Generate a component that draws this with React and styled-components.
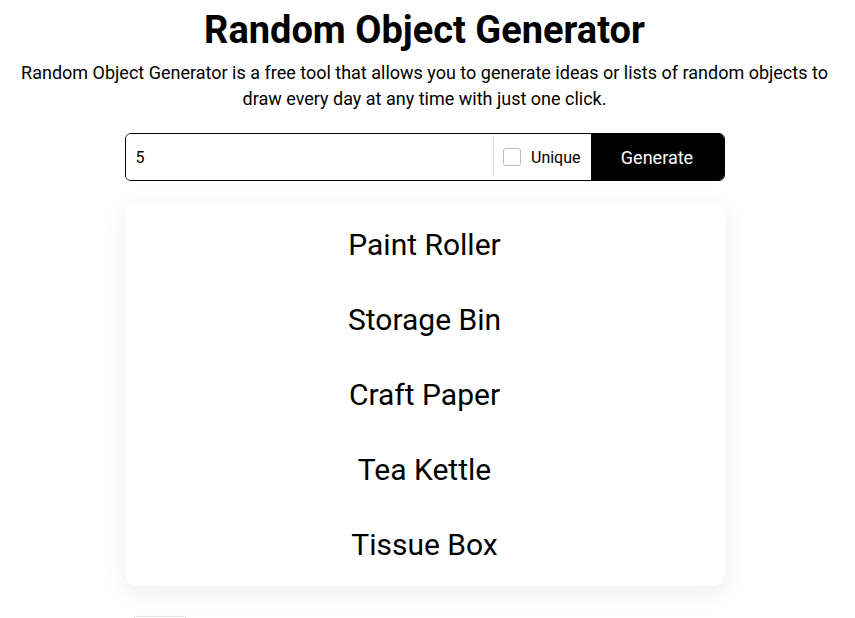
import React from 'react';
import styled, { createGlobalStyle } from 'styled-components';

const GlobalStyle = createGlobalStyle`
  body {
    margin: 0;
    font-family: Roboto, "Liberation Sans", sans-serif;
    color: #000;
    background: #fff;
  }
`;

const Page = styled.div`
  display: flex;
  flex-direction: column;
  align-items: center;
  padding: 8px 6px 0 0;
`;

const Title = styled.h1`
  margin: 0;
  font-size: 38px;
  line-height: 44px;
  font-weight: 700;
`;

const Description = styled.p`
  margin: 8px 0 0;
  font-size: 18px;
  line-height: 26px;
  text-align: center;
  width: 820px;
`;

const Form = styled.div`
  display: flex;
  width: 600px;
  height: 48px;
  box-sizing: border-box;
  margin-top: 21px;
  border: 1px solid #000;
  border-radius: 6px;
  overflow: hidden;
`;

const CountInput = styled.input`
  flex: 1;
  min-width: 0;
  border: none;
  outline: none;
  padding: 0 10px;
  font: 16px Roboto, "Liberation Sans", sans-serif;
  color: #000;
`;

const Divider = styled.div`
  width: 1px;
  background: #ddd;
  margin: 4px 0;
`;

const CheckLabel = styled.label`
  display: flex;
  align-items: center;
  gap: 10px;
  padding: 0 10px 0 9px;
  font-size: 16px;
`;

const Box = styled.span`
  width: 16px;
  height: 16px;
  border: 1px solid #bbb;
  border-radius: 3px;
`;

const GenerateButton = styled.button`
  width: 133px;
  border: none;
  background: #000;
  color: #fff;
  font: 18px Roboto, "Liberation Sans", sans-serif;
  cursor: pointer;
`;

const Card = styled.ul`
  list-style: none;
  margin: 21px 0 0;
  padding: 4.5px 0;
  width: 600px;
  background: #fff;
  border-radius: 12px;
  box-shadow: 0 6px 24px rgba(0, 0, 0, 0.08);
`;

const Item = styled.li`
  height: 75px;
  line-height: 75px;
  text-align: center;
  font-size: 30px;
`;

const Footer = styled.div`
  width: 600px;
  margin-top: 30px;
`;

const Tag = styled.div`
  margin-left: 9px;
  width: 52px;
  height: 20px;
  border: 1px solid #e5e5e5;
  box-sizing: border-box;
`;

const objects = ['Paint Roller', 'Storage Bin', 'Craft Paper', 'Tea Kettle', 'Tissue Box'];

export default function App() {
  return (
    <Page>
      <GlobalStyle />
      <Title>Random Object Generator</Title>
      <Description>
        Random Object Generator is a free tool that allows you to generate ideas or lists of random objects to draw every day at any time with just one click.
      </Description>
      <Form>
        <CountInput defaultValue="5" />
        <Divider />
        <CheckLabel>
          <Box />
          Unique
        </CheckLabel>
        <GenerateButton>Generate</GenerateButton>
      </Form>
      <Card>
        {objects.map((o) => (
          <Item key={o}>{o}</Item>
        ))}
      </Card>
      <Footer>
        <Tag />
      </Footer>
    </Page>
  );
}
